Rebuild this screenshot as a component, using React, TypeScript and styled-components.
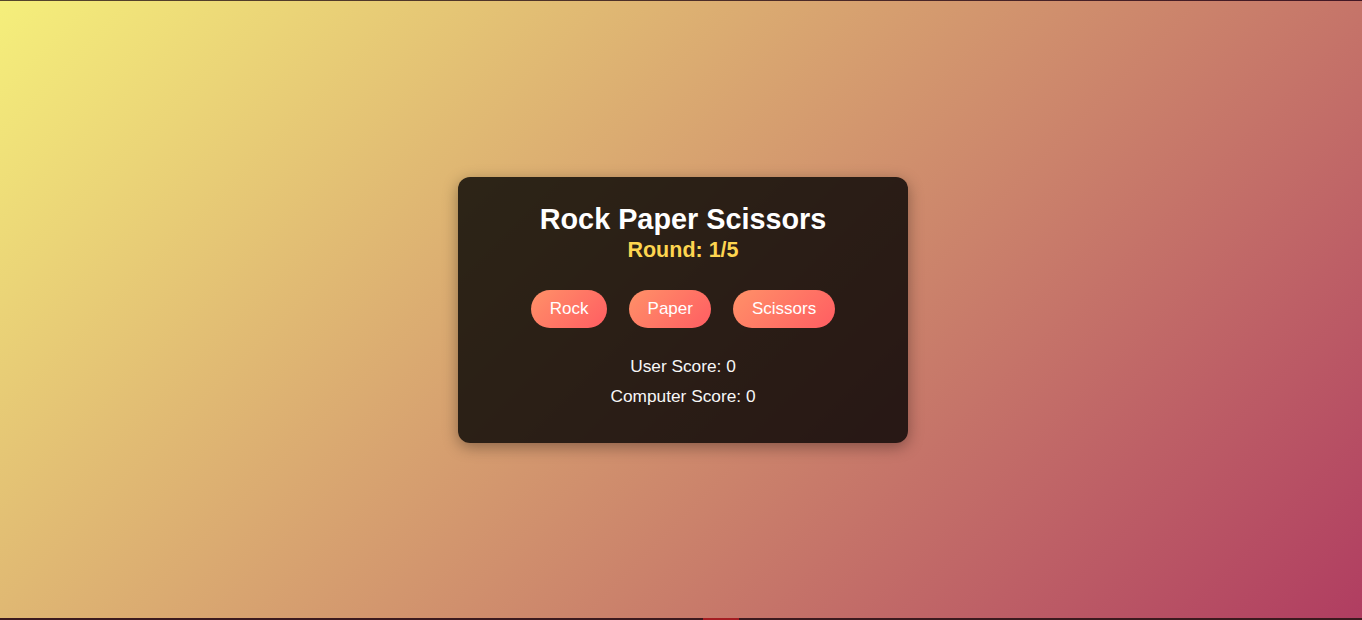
import React from "react";
import styled, { createGlobalStyle } from "styled-components";

const GlobalStyle = createGlobalStyle`
  html, body {
    margin: 0;
    padding: 0;
  }
  body {
    font-family: "Liberation Sans", Arial, sans-serif;
  }
  * {
    box-sizing: border-box;
  }
`;

const Page = styled.div`
  position: relative;
  width: 100%;
  height: 620px;
  overflow: hidden;
  border-top: 1px solid rgba(0, 0, 0, 0.62);
  background: linear-gradient(135deg, #f5ef7b 0%, #b03d61 100%);
  display: flex;
  align-items: center;
  justify-content: center;
  padding: 0 0 1px 4px;
`;

const BottomBar = styled.div`
  position: absolute;
  left: 0;
  right: 0;
  bottom: 0;
  height: 2px;
  background: #3b1a1f;
`;

const BarMarker = styled.div`
  position: absolute;
  left: 703px;
  width: 36px;
  top: 0;
  bottom: 0;
  background: #a41d22;
`;

const Card = styled.div`
  width: 450px;
  height: 266px;
  padding: 26px 20px 0;
  border-radius: 12px;
  background: rgba(0, 0, 0, 0.8);
  box-shadow: 0 4px 15px rgba(0, 0, 0, 0.35);
  display: flex;
  flex-direction: column;
  align-items: center;
  text-align: center;
`;

const Title = styled.h1`
  margin: 0;
  font-size: 28.8px;
  line-height: 33px;
  font-weight: 700;
  color: #ffffff;
`;

const Round = styled.h2`
  margin: 2px 0 0;
  font-size: 21.5px;
  line-height: 25px;
  font-weight: 700;
  color: #fdd550;
`;

const Choices = styled.div`
  margin-top: 27px;
  display: flex;
  gap: 22px;
`;

const ChoiceButton = styled.button`
  height: 38px;
  border: none;
  border-radius: 19px;
  padding: 0 18.5px;
  font-family: "Liberation Sans", Arial, sans-serif;
  font-size: 17px;
  line-height: 38px;
  color: #ffffff;
  background: linear-gradient(135deg, #ff9168 0%, #ff5d62 100%);
  cursor: pointer;
`;

const Scores = styled.div`
  margin-top: 28px;
  display: flex;
  flex-direction: column;
  gap: 10px;
`;

const ScoreLine = styled.p`
  margin: 0;
  font-size: 17.3px;
  line-height: 20px;
  color: #f7f7f7;
`;

export default function App() {
  const choices = ["Rock", "Paper", "Scissors"];
  return (
    <>
      <GlobalStyle />
      <Page>
        <Card>
          <Title>Rock Paper Scissors</Title>
          <Round>Round: 1/5</Round>
          <Choices>
            {choices.map((c) => (
              <ChoiceButton key={c}>{c}</ChoiceButton>
            ))}
          </Choices>
          <Scores>
            <ScoreLine>User Score: 0</ScoreLine>
            <ScoreLine>Computer Score: 0</ScoreLine>
          </Scores>
        </Card>
        <BottomBar>
          <BarMarker />
        </BottomBar>
      </Page>
    </>
  );
}
